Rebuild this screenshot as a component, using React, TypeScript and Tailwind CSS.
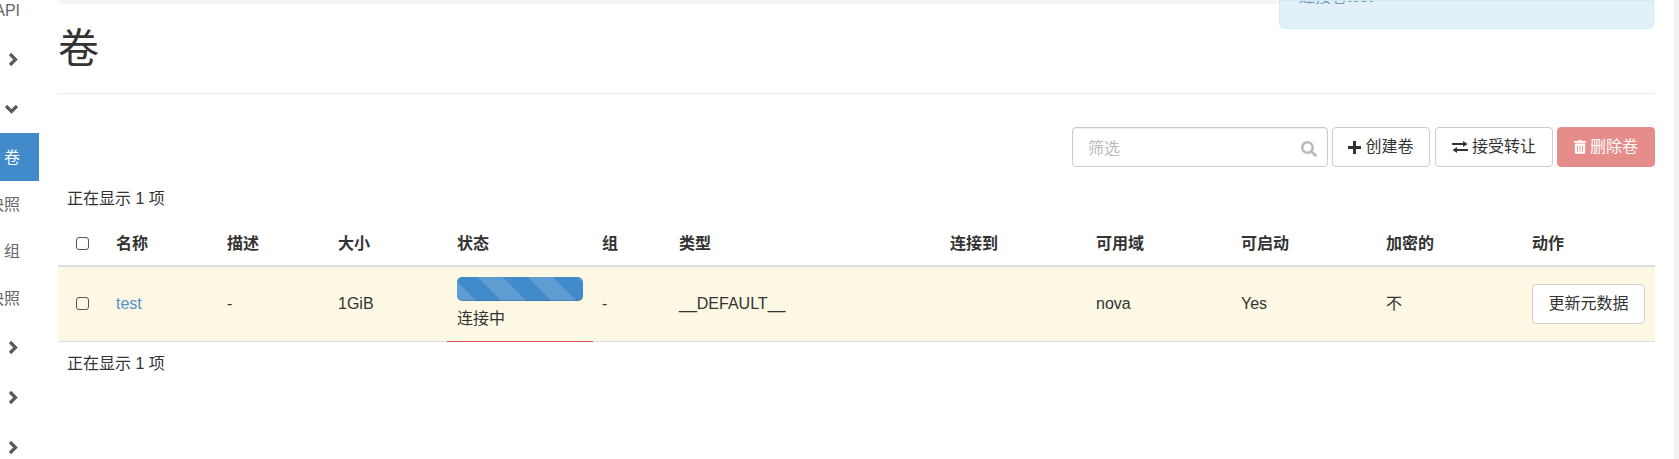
import { FaSearch, FaTrashAlt } from "react-icons/fa";

const FONT = "font-['Liberation_Sans','Noto_Sans_CJK_SC',sans-serif]";

const columns = [
  { label: "名称", width: "w-[111px]", pad: "pl-[10px]" },
  { label: "描述", width: "w-[111px]", pad: "pl-[10px]" },
  { label: "大小", width: "w-[119px]", pad: "pl-[10px]" },
  { label: "状态", width: "w-[146px]", pad: "pl-[10px]" },
  { label: "组", width: "w-[77px]", pad: "pl-[9px]" },
  { label: "类型", width: "w-[270px]", pad: "pl-[9px]" },
  { label: "连接到", width: "w-[146px]", pad: "pl-[10px]" },
  { label: "可用域", width: "w-[145px]", pad: "pl-[10px]" },
  { label: "可启动", width: "w-[145px]", pad: "pl-[10px]" },
  { label: "加密的", width: "w-[146px]", pad: "pl-[10px]" },
  { label: "动作", width: "w-[133px]", pad: "pl-[10px]" },
];

function Checkbox() {
  return <span className="block w-[13px] h-[13px] rounded-[3px] border-[1.5px] border-[#555] bg-transparent" />;
}

function NavCategory({ open = false }: { open?: boolean }) {
  return (
    <div className="h-[50px] flex items-center text-[#5a5a5a]">
      {open ? (
        <svg viewBox="0 0 15 10" className="w-[15px] h-[10px] ml-[4px]">
          <polyline points="2,2 7.5,7.5 13,2" fill="none" stroke="currentColor" strokeWidth="3.2" />
        </svg>
      ) : (
        <svg viewBox="0 0 10 15" className="w-[10px] h-[15px] ml-[8px]">
          <polyline points="2,2 7.5,7.5 2,13" fill="none" stroke="currentColor" strokeWidth="3.2" />
        </svg>
      )}
    </div>
  );
}

function NavLink({ label }: { label: string }) {
  return (
    <div className="h-[47px] w-[20px] overflow-hidden flex items-center justify-end whitespace-nowrap text-[#666]">
      {label}
    </div>
  );
}

export default function App() {
  return (
    <div className={`${FONT} relative flex h-[459px] w-[1679px] overflow-hidden bg-white text-[16px] text-[#333]`}>
      {/* Sidebar */}
      <aside className="w-[58px] shrink-0">
        <div className="h-[21px] w-[20px] overflow-hidden flex items-center justify-end text-[#666]">API</div>
        <div className="h-[13px]" />
        <NavCategory />
        <NavCategory open />
        <div className="h-[48px] w-[39px] -mt-[1px] bg-[#428bca] text-white flex items-center justify-end pr-[19px] pt-[1px]">卷</div>
        <NavLink label="快照" />
        <NavLink label="组" />
        <NavLink label="快照" />
        <NavCategory />
        <NavCategory />
        <NavCategory />
      </aside>

      {/* Main */}
      <main className="w-[1597px] shrink-0">
        <div className="h-[4px] bg-[#f5f5f5] rounded-bl-[5px]" />
        <h1 className="h-[90px] pt-[21px] text-[41px] leading-[49px] font-normal border-b border-[#eee]">卷</h1>

        <div className="mt-[33px] flex justify-end">
          <div className="relative w-[256px] h-[40px] mr-[4px]">
            <div className="w-full h-full rounded-[4px] border border-[#ccc] shadow-[inset_0_1px_1px_rgba(0,0,0,0.075)] pl-[15px] pt-[3px] flex items-center text-[#bbb]">筛选</div>
            <FaSearch className="absolute right-[11px] top-[14px] w-[16px] h-[16px] text-[#bbb]" />
          </div>
          <button className="w-[98px] h-[40px] mr-[5px] rounded-[4px] border border-[#ccc] bg-white flex items-center justify-center gap-[4px]">
            <svg viewBox="0 0 13 13" className="w-[13px] h-[13px]">
              <path d="M5 0h3v5h5v3H8v5H5V8H0V5h5z" fill="currentColor" />
            </svg>
            创建卷
          </button>
          <button className="w-[118px] h-[40px] mr-[4px] rounded-[4px] border border-[#ccc] bg-white flex items-center justify-center gap-[4px]">
            <svg viewBox="0 0 16 12" className="w-[16px] h-[12px]">
              <path d="M0 2h11V0l4.5 3L11 6V4H0zM16 8H5V6L.5 9 5 12v-2h11z" fill="currentColor" />
            </svg>
            接受转让
          </button>
          <button className="w-[98px] h-[40px] rounded-[4px] border border-[#e68d8b] bg-[#e68d8b] text-white flex items-center justify-center gap-[4px]">
            <FaTrashAlt className="w-[12px] h-[14px]" />
            删除卷
          </button>
        </div>

        <div className="mt-[21px] pl-[9px] h-[22px] leading-[22px]">正在显示 1 项</div>

        <table className="mt-[12px] table-fixed border-collapse w-[1597px]">
          <colgroup>
            <col className="w-[48px]" />
            {columns.map((col) => (
              <col key={col.label} className={col.width} />
            ))}
          </colgroup>
          <thead>
            <tr className="h-[44px] border-b-2 border-[#ddd]">
              <th className="pl-[18px] align-middle">
                <Checkbox />
              </th>
              {columns.map((col) => (
                <th key={col.label} className={`${col.pad} text-left font-bold align-middle`}>
                  {col.label}
                </th>
              ))}
            </tr>
          </thead>
          <tbody>
            <tr className="h-[75px] bg-[#fcf8e3] border-b border-[#ddd]">
              <td className="pl-[18px] align-middle">
                <Checkbox />
              </td>
              <td className="px-[10px] text-[#5291cc]">test</td>
              <td className="px-[10px]">-</td>
              <td className="px-[10px]">1GiB</td>
              <td className="px-[10px] align-top border-b border-[#d9534f]">
                <div className="mt-[10px] h-[24px] rounded-[5px] shadow-[inset_0_-1px_0_rgba(0,0,0,0.15)] bg-[#428bca] bg-[linear-gradient(45deg,rgba(255,255,255,0.15)_25%,transparent_25%,transparent_50%,rgba(255,255,255,0.15)_50%,rgba(255,255,255,0.15)_75%,transparent_75%,transparent)] bg-[length:50px_50px] bg-[position:21px_0]" />
                <div className="mt-[6px] leading-[24px]">连接中</div>
              </td>
              <td className="pl-[9px]">-</td>
              <td className="pl-[9px]">__DEFAULT__</td>
              <td className="px-[10px]" />
              <td className="px-[10px]">nova</td>
              <td className="px-[10px]">Yes</td>
              <td className="px-[10px]">不</td>
              <td className="px-[10px]">
                <button className="w-[113px] h-[40px] rounded-[4px] border border-[#ccc] bg-white">更新元数据</button>
              </td>
            </tr>
          </tbody>
        </table>

        <div className="mt-[11px] pl-[9px] h-[22px] leading-[22px]">正在显示 1 项</div>
      </main>

      <div className="ml-[19px] w-[5px] bg-[#f1f1f1]" />

      {/* Notification */}
      <div className="absolute right-[25px] top-0 w-[375px] h-[29px] overflow-hidden rounded-b-[6px] border border-[#bce8f1]/50 bg-[#e2f1f9] pl-[19px] text-[#6f97b3]">
        <div className="-mt-[16px] leading-[24px]">连接卷test</div>
      </div>
    </div>
  );
}
